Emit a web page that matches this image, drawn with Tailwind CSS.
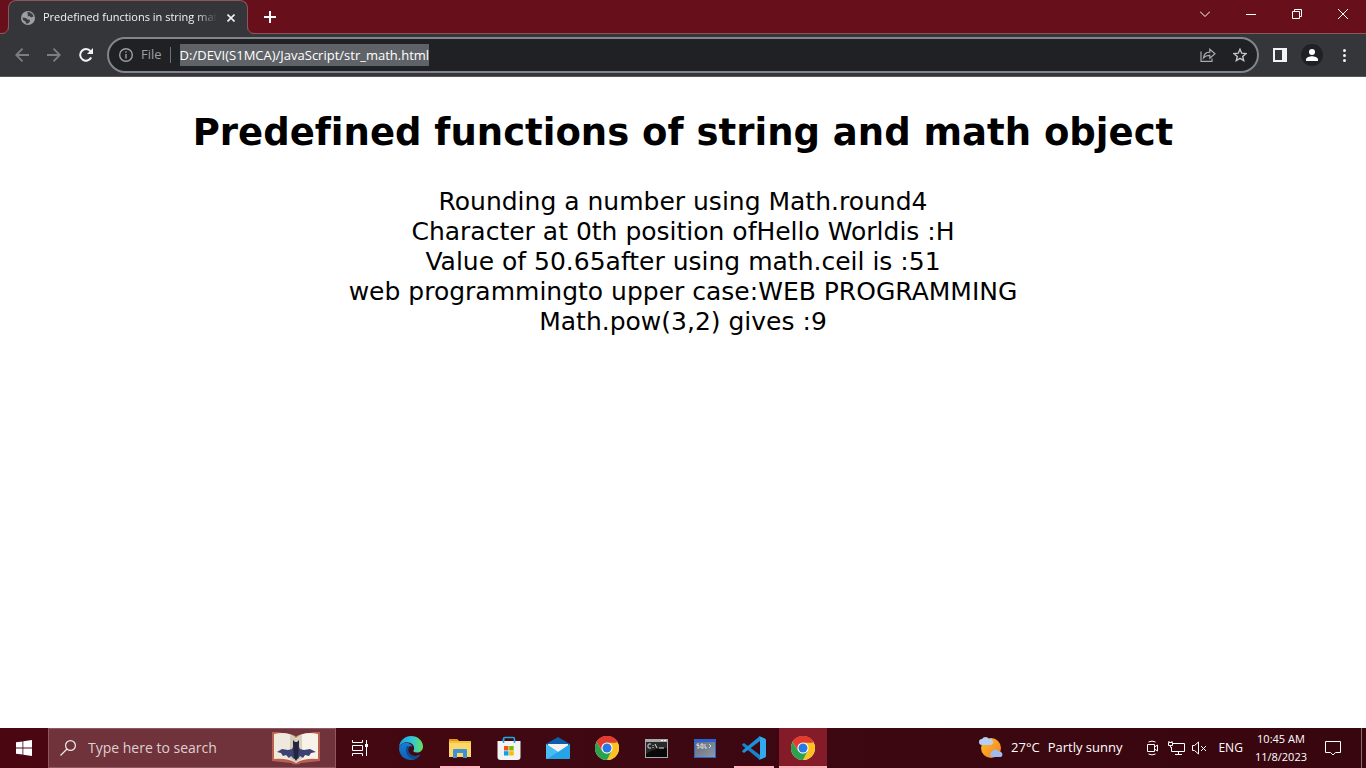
<!DOCTYPE html>
<html lang="en">
<head>
<meta charset="utf-8">
<meta name="viewport" content="width=device-width, initial-scale=1">
<title>Predefined functions in string math</title>
<script src="https://cdn.jsdelivr.net/npm/@tailwindcss/browser@4"></script>
</head>
<body class="flex h-screen flex-col overflow-hidden bg-white font-['Open_Sans',sans-serif]">

<svg class="hidden" aria-hidden="true">
  <symbol id="chrome" viewBox="0 0 24 24">
    <circle cx="12" cy="12" r="12" fill="#fff"/>
    <path d="M12 12 1.6 6A12 12 0 0 1 22.4 6z" fill="#e33b2e"/>
    <path d="M12 6.5H22.7A12 12 0 0 1 12 24L16.8 14.8z" fill="#fcc31e"/>
    <path d="M7.2 14.8 1.6 6A12 12 0 0 0 12 24L16.8 14.8 12 17.5z" fill="#2ba24c"/>
    <path d="M1.6 6 7.2 14.8 12 6.5H22.7A12 12 0 0 0 1.6 6z" fill="#e33b2e"/>
    <circle cx="12" cy="12" r="5.6" fill="#fff"/>
    <circle cx="12" cy="12" r="4.5" fill="#2b78e4"/>
  </symbol>
</svg>

<header class="shrink-0">
  <div class="flex h-[34px] items-start border-b border-[#8d555c] bg-[#670f1a] pl-2">
    <div class="relative flex h-[34px] w-60 items-center rounded-t-lg border border-b-0 border-[#8d555c] bg-[#35363a] pr-1.5 pl-3">
      <svg class="absolute bottom-0 -left-2 size-2" viewBox="0 0 8 8"><path d="M0 8Q8 8 8 0H9V8z" fill="#35363a"/><path d="M0 7.500Q7.500 7.500 7.500 0" fill="none" stroke="#8d555c"/></svg>
      <svg class="absolute -right-2 bottom-0 size-2" viewBox="0 0 8 8"><path d="M8 8Q0 8 0 0H-1V8z" fill="#35363a"/><path d="M8 7.500Q.5 7.500 .5 0" fill="none" stroke="#8d555c"/></svg>
      <svg class="size-3.5 shrink-0" viewBox="0 0 14 14"><circle cx="7" cy="7" r="7" fill="#9aa0a6"/><path d="M6 1.500 8 1l3.500 2L12.500 5.500 10 6.500 8.500 5 6.500 5.500 7 3.500zM1.500 6.500 5 7l1.500 1.500H8.500L9 10.500 7 12.500 5 12.500 4.500 10.500 2 9z" fill="#3c3d41"/></svg>
      <span class="ml-2 min-w-0 flex-1 overflow-hidden mask-r-from-88% mask-r-to-100% text-[11px] whitespace-nowrap text-[#f1f3f4]">Predefined functions in string math</span>
      <button class="ml-1 flex size-5 items-center justify-center" aria-label="Close tab"><svg class="size-2" viewBox="0 0 8 8" fill="none" stroke="#f1f3f4" stroke-width="1.600"><path d="m.5.5 7 7m0-7-7 7"/></svg></button>
    </div>
    <button class="ml-2 flex h-[34px] w-7 items-center justify-center" aria-label="New tab"><svg class="size-3" viewBox="0 0 12 12" fill="none" stroke="#fff" stroke-width="2"><path d="M6 0v12M0 6h12"/></svg></button>
    <div class="ml-auto flex h-7 text-white">
      <button class="flex w-[46px] items-center justify-center" aria-label="Search tabs"><svg class="h-1.5 w-2.5" viewBox="0 0 10 6" fill="none" stroke="currentColor"><path d="m0 .5 5 5 5-5"/></svg></button>
      <button class="flex w-[46px] items-center justify-center" aria-label="Minimize"><svg class="h-px w-2.5" viewBox="0 0 10 1"><path d="M0 0h10v1H0z" fill="currentColor"/></svg></button>
      <button class="flex w-[46px] items-center justify-center" aria-label="Restore"><svg class="size-2.5" viewBox="0 0 10 10" fill="none" stroke="currentColor"><path d="M.5 2.500h7v7h-7zM2.500 2.500v-2h7v7h-2"/></svg></button>
      <button class="flex w-[46px] items-center justify-center" aria-label="Close"><svg class="size-2.5" viewBox="0 0 10 10" fill="none" stroke="currentColor"><path d="m0 0 10 10M10 0 0 10"/></svg></button>
    </div>
  </div>

  <div class="flex h-[43px] items-center border-b border-[#57575a] bg-[#35363a] pl-1.5">
    <button class="flex size-8 items-center justify-center" aria-label="Back"><svg class="size-3.5" viewBox="0 0 14 14" fill="none" stroke="#7c7e81" stroke-width="1.800"><path d="M14 7H1.500M7.500.7 1.200 7l6.300 6.300"/></svg></button>
    <button class="flex size-8 items-center justify-center" aria-label="Forward"><svg class="size-3.5" viewBox="0 0 14 14" fill="none" stroke="#7c7e81" stroke-width="1.800"><path d="M0 7h12.500M6.500.7 12.800 7l-6.300 6.300"/></svg></button>
    <button class="flex size-8 items-center justify-center" aria-label="Reload"><svg class="size-3.5" viewBox="0 0 14 14"><path d="M12.200 9.500A5.800 5.800 0 1 1 11.500 3.200" fill="none" stroke="#f1f3f4" stroke-width="2"/><path d="M14 0v6H8z" fill="#f1f3f4"/></svg></button>
    <div class="ml-[5px] flex h-9 flex-1 items-center rounded-full border-2 border-[#80868b] bg-[#202124] pr-px pl-2.5">
      <svg class="size-3.5" viewBox="0 0 14 14" fill="none" stroke="#9aa0a6" stroke-width="1.400"><circle cx="7" cy="7" r="6.300"/><path d="M7 6v4.500M7 3.300v1.500"/></svg>
      <label for="address" class="ml-2 text-[13px] text-[#9aa0a6]">File</label>
      <span class="ml-2 h-4 w-px bg-[#6d7175]"></span>
      <input id="address" type="text" value="D:/DEVI(S1MCA)/JavaScript/str_math.html" class="ml-[9px] h-[22px] field-sizing-content bg-[#5f6368] text-[13px] text-white outline-none">
      <button class="ml-auto flex size-8 items-center justify-center" aria-label="Share"><svg class="h-3.5 w-4" viewBox="0 0 16 14" fill="none" stroke="#a7abae" stroke-width="1.200"><path d="M1 3.500v9.800h11V10.500M3.500 9.800C4 6 6 4.300 9.800 4.200V1.200L15 5.700l-5.200 4.500V7.300C7 7.200 5 8 3.500 9.800z"/></svg></button>
      <button class="flex size-8 items-center justify-center" aria-label="Bookmark"><svg class="size-3.5" viewBox="0 0 14 14" fill="none" stroke="#c2c5c8" stroke-width="1.400"><path d="m7 1.200 1.700 4 4.300.4-3.300 2.800 1 4.200L7 10.400l-3.700 2.200 1-4.200L1 5.600l4.300-.4z"/></svg></button>
    </div>
    <div class="flex pr-1.5 pl-[5px]">
      <button class="flex size-8 items-center justify-center" aria-label="Side panel"><svg class="size-3.5" viewBox="0 0 14 14"><path d="M0 0h14v14H0zM2 2v10h7V2z" fill="#f1f3f4" fill-rule="evenodd"/></svg></button>
      <button class="flex size-8 items-center justify-center" aria-label="Profile"><svg class="size-[22px]" viewBox="0 0 22 22"><circle cx="11" cy="11" r="11" fill="#202124"/><circle cx="11" cy="8" r="3" fill="#fff"/><path d="M5 17v-1.500C5 13 9 12.200 11 12.200s6 .8 6 3.300V17z" fill="#fff"/></svg></button>
      <button class="flex size-8 items-center justify-center" aria-label="Menu"><svg class="h-[13px] w-[3px]" viewBox="0 0 3 13" fill="#f1f3f4"><circle cx="1.500" cy="1.500" r="1.500"/><circle cx="1.500" cy="6.500" r="1.500"/><circle cx="1.500" cy="11.500" r="1.500"/></svg></button>
    </div>
  </div>
</header>

<main class="min-h-0 flex-1 overflow-hidden px-2 pt-[33px] text-center font-['DejaVu_Sans',sans-serif] text-black [font-variant-ligatures:none]">
  <h1 class="text-[37px] leading-[46px] font-bold">Predefined functions of string and math object</h1>
  <p class="mt-[31px] text-[25px] leading-[30px]">Rounding a number using Math.round4<br>Character at 0th position ofHello Worldis :H<br>Value of 50.65after using math.ceil is :51<br>web programmingto upper case:WEB PROGRAMMING<br>Math.pow(3,2) gives :9</p>
</main>

<footer class="flex h-10 shrink-0 bg-linear-to-r from-[#4b0711] via-[#3f0812] via-40% to-[#38060f] text-white">
  <button class="flex w-12 items-center justify-center" aria-label="Start"><svg class="size-4" viewBox="0 0 16 16" fill="#fff"><path d="M0 2.300 6.500 1.400v6.200H0zM7.300 1.300 16 0v7.600H7.300zM0 8.400h6.500v6.200L0 13.700zM7.300 8.400H16V16l-8.700-1.300z"/></svg></button>
  <div class="flex w-72 items-center border border-[#8d5860] bg-[#70333b] pr-[15px] pl-[11px]">
    <svg class="size-4" viewBox="0 0 16 16" fill="none" stroke="#f3e9ea" stroke-width="1.200"><circle cx="10.500" cy="5.500" r="4.900"/><path d="M7 9 .5 15.500"/></svg>
    <input type="text" aria-label="Search" placeholder="Type here to search" class="ml-3 min-w-0 flex-1 bg-transparent text-sm outline-none placeholder:text-[#dfcfd1]">
    <svg class="h-9 w-12" viewBox="0 0 48 36">
      <path d="M0 2h6l18 4 18-4h6v29l-19 2q-5 3-10 0L0 31z" fill="#b9604f"/>
      <path d="M2 4Q17 1 24 8v25Q16 28 2 29z" fill="#eee9dc"/><path d="M46 4Q31 1 24 8v25Q32 28 46 29z" fill="#f7f3e9"/>
      <path d="M18 4q5 1 6 4v25q-3-3-6-4zM30 4q-5 1-6 4v25q3-3 6-4z" fill="#c4b9a0" opacity=".6"/>
      <path d="m5 22 5-3 6 1 4-1 2-4 2 2 2-2 2 4 4 1 6-1 6 3-5 1-2 3-4-1-2 3-3-2-2 3-2-2-2 2-3-3-2 2-3-3-3 1-2-3z" fill="#3d4272"/>
      <path d="M21 10l2 2h2l2-2v4l-1 14-2 3-2-3-1-14z" fill="#23253f"/>
    </svg>
  </div>
  <button class="flex w-12 items-center justify-center" aria-label="Task view"><svg class="size-4" viewBox="0 0 16 16" fill="none" stroke="#fff"><path d="M.5 0v2.500h10V0M.5 5.500h10v5H.5zM.5 16v-2.500h10V16M14.500 0v16"/><path d="M13 4h3v3h-3z" fill="#fff" stroke="none"/></svg></button>
  <nav class="ml-[3px] flex gap-px" aria-label="Taskbar apps">
    <button class="flex w-12 items-center justify-center" aria-label="Edge"><svg class="size-6" viewBox="0 0 24 24">
      <defs><linearGradient id="edgeTop"><stop stop-color="#1b9fe0"/><stop offset=".55" stop-color="#34c5d8"/><stop offset="1" stop-color="#67df58"/></linearGradient><linearGradient id="edgeBody" x2="0" y2="1"><stop stop-color="#147fd2"/><stop offset="1" stop-color="#1060b5"/></linearGradient></defs>
      <path d="M0 11C1 4 6 0 12 0c7 0 12 5 12 10.500 0 4-3 6-6 6-3 0-4-1-3.500-2 1.500-2 .5-6-3-7.500C7 5 2 7 0 11z" fill="url(#edgeTop)"/>
      <path d="M0 12C1 8 5 6 9 7c2 .5 4 2 4.500 3.500C9 9 7.500 13 8.500 16c1.200 4 6 6 13 2.500C19 22 16 24 12 24 5 24 0 19 0 12z" fill="url(#edgeBody)"/>
      <path d="M8 10c-3 5 0 12 7 13.500 3-1 5-2.500 6.500-5-5 3-11 1-12-3.500-.4-2 .3-3.500 1.500-4.500z" fill="#114b92"/>
    </svg></button>
    <button class="flex w-12 flex-col items-center" aria-label="File Explorer"><span class="flex h-[38px] items-center"><svg class="mt-0.5 h-[19px] w-[22px]" viewBox="0 0 22 19"><path d="M0 0h8l2 2h12v16H0z" fill="#f4c13d"/><path d="M0 0h8l1 2H0z" fill="#e19b12"/><path d="M0 4h22v14H0z" fill="#ffd768"/><path d="M4 11q0-1 1-1h12q1 0 1 1v8h-4v-5H8v5H4z" fill="#3c93d3"/></svg></span><span class="h-0.5 w-10 bg-[#ffb3bd]"></span></button>
    <button class="flex w-12 items-center justify-center" aria-label="Microsoft Store"><svg class="size-6" viewBox="0 0 24 24"><path d="M6.500 7V3q0-1.500 1.500-1.500h8q1.500 0 1.500 1.500v4" fill="none" stroke="#22a8dc" stroke-width="1.600"/><path d="M.5 5h23v16q0 3-3 3h-17q-3 0-3-3z" fill="#f3f3f3"/><path d="M6.500 5V3M17.500 5v2M6.500 5v2" stroke="#22a8dc" stroke-width="1.600"/><path d="M7 10h4.500v4.500H7z" fill="#f25022"/><path d="M12.200 10h4.500v4.500h-4.500z" fill="#7fba00"/><path d="M7 15.200h4.500v4.300H7z" fill="#00a4ef"/><path d="M12.200 15.200h4.500v4.300h-4.500z" fill="#ffb900"/></svg></button>
    <button class="flex w-12 items-center justify-center" aria-label="Mail"><svg class="size-6" viewBox="0 0 24 24"><path d="M0 8 12 1l12 7v2l-12 7L0 10z" fill="#0f5ca8"/><path d="M2 8h20v6l-10 3L2 14z" fill="#f2f2f2"/><path d="M0 8v14q0 1 1 1h22q1 0 1-1V8l-12 8z" fill="#25a4e8"/><path d="M0 8v14q0 1 1 1l14-9-3 2z" fill="#47bdf2"/></svg></button>
    <button class="flex w-12 items-center justify-center" aria-label="Chrome"><svg class="size-6"><use href="#chrome"/></svg></button>
    <button class="flex w-12 items-center justify-center" aria-label="Command Prompt"><svg class="h-[19px] w-[23px]" viewBox="0 0 23 19"><path d="M0 0h23v19H0z" fill="#a5aaad"/><path d="M1 3h21v15H1z" fill="#090909"/><path d="M1 3h21v6Q10 8 1 15z" fill="#292929"/><path d="M16 1h2v1h-2zM19 1h2v1h-2z" fill="#fff"/><path d="M6 5H4q-1 0-1 1v2q0 1 1 1h2M8 6v1M8 8v1M10 5l2 4M14 9h5" fill="none" stroke="#ddd"/></svg></button>
    <button class="flex w-12 items-center justify-center" aria-label="SQL command line"><svg class="h-[19px] w-[22px]" viewBox="0 0 22 19"><defs><linearGradient id="sql" x2="1" y2="1"><stop stop-color="#646c79"/><stop offset="1" stop-color="#8f98a6"/></linearGradient></defs><path d="M0 0h22v19H0z" fill="#2862d3"/><path d="M1 3h20v15H1z" fill="url(#sql)"/><path d="M5 5H3v1.500h2V9H3M9 9H7V5h2v4.500M11 5v4h2M15 5l2 2-2 2" fill="none" stroke="#e4e7eb" stroke-width=".9"/></svg></button>
    <button class="flex w-12 flex-col items-center" aria-label="Visual Studio Code"><span class="flex h-[38px] items-center"><svg class="mt-0.5 size-6" viewBox="0 0 24 24"><path d="M0 8.500 2 7l16 12v5L1 10q-1-1-1-1.500z" fill="#1484cb"/><path d="M0 15.500 2 17 18 5V0L1 14q-1 1-1 1.500z" fill="#1b91db"/><path d="m17 0 6 2.500q1 .5 1 1.500v16q0 1-1 1.500L17 24q1-.5 1-2V2q0-1.500-1-2z" fill="#31a9ee"/></svg></span><span class="h-0.5 w-10 bg-[#ffb3bd]"></span></button>
    <button class="flex w-12 flex-col items-center bg-[#841b28]" aria-label="Chrome, active"><span class="flex h-[38px] items-center"><svg class="mt-0.5 size-6"><use href="#chrome"/></svg></span><span class="h-0.5 w-12 bg-[#ffb3bd]"></span></button>
  </nav>
  <div class="ml-auto flex items-center">
    <button class="flex items-center text-[13px]"><svg class="size-6" viewBox="0 0 24 24"><defs><linearGradient id="sun" x2="1" y2="1"><stop stop-color="#ffbd2d"/><stop offset="1" stop-color="#f5801f"/></linearGradient></defs><circle cx="12" cy="12" r="10" fill="url(#sun)"/><path d="M3 9a3 3 0 0 1 0-6 4 4 0 0 1 7 0 3 3 0 0 1 2 6z" fill="#b8cff5"/><path d="M13 21a3 3 0 0 1 0-5.500 4 4 0 0 1 7 0 3 3 0 0 1 2 5.500z" fill="#9fbcf0"/></svg><span class="ml-2">27°C</span><span class="ml-2">Partly sunny</span></button>
    <button class="ml-6" aria-label="Meet Now"><svg class="h-4 w-3.5" viewBox="0 0 14 16" fill="none" stroke="#fff"><path d="M1.500 4.500h7v7h-7zM8.500 7l3-2v6l-3-2M2.500 2Q6 .2 9.500 2M2.500 14q3.500 1.800 7 0"/></svg></button>
    <button class="ml-2" aria-label="Network"><svg class="h-4 w-[17px]" viewBox="0 0 17 16" fill="none" stroke="#fff"><path d="M5 3.500h11.500v8h-13V7M10.500 11.500v3M7 14.500h7M.5 2.500h4v3h-4zM2.500 5.500v2M1 1v1M4 1v1"/></svg></button>
    <button class="ml-1.5" aria-label="Volume muted"><svg class="h-4 w-[17px]" viewBox="0 0 17 16" fill="none" stroke="#fff"><path d="M1.500 5.500h2l4-3.500v12l-4-3.500h-2zM10 6l5 5m0-5-5 5"/></svg></button>
    <button class="ml-2.5 text-xs">ENG</button>
    <button class="ml-3 text-[11px] leading-[18px]">10:45 AM<br>11/8/2023</button>
    <button class="mr-5 ml-[18px]" aria-label="Notifications"><svg class="size-4" viewBox="0 0 16 16" fill="none" stroke="#fff"><path d="M.5 1.500h15v11h-5L8 15l-2.500-2.500h-5z"/></svg></button>
    <button class="h-10 w-[5px] border-l border-[#8c6a70]" aria-label="Show desktop"></button>
  </div>
</footer>
</body>
</html>
